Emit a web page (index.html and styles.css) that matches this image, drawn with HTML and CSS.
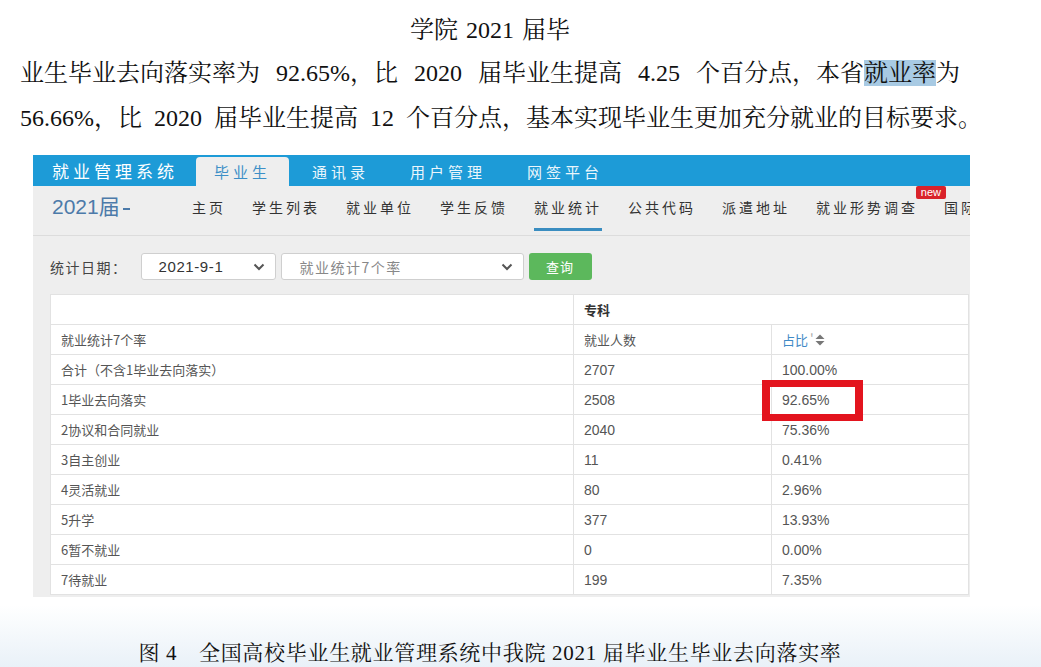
FILE: index.html
```html
<!DOCTYPE html>
<html lang="zh-CN">
  <head>
    <meta charset="UTF-8" />
    <meta name="viewport" content="width=device-width, initial-scale=1.0" />
    <title>毕业去向落实率</title>
    <link rel="stylesheet" href="styles.css">
  </head>
  <body>
    <div class="page">
      <p class="title">学院 2021 届毕</p>
      <p class="para"><span class="wide">业生毕业去向落实率为 92.65%，比 2020 届毕业生提高 4.25 个百分点，本省<span class="hl">就业率</span>为</span><br>56.66%，比 2020 届毕业生提高 12 个百分点，基本实现毕业生更加充分就业的目标要求。</p>

      <div class="shot">
        <div class="topbar">
          <div class="brand">就业管理系统</div>
          <div class="tab active">毕业生</div>
          <div class="tab">通讯录</div>
          <div class="tab">用户管理</div>
          <div class="tab">网签平台</div>
        </div>

        <div class="subnav">
          <div class="year">2021届<span class="caret"></span></div>
          <div class="menu">
            <div class="item">主页</div>
            <div class="item">学生列表</div>
            <div class="item">就业单位</div>
            <div class="item">学生反馈</div>
            <div class="item current">就业统计</div>
            <div class="item">公共代码</div>
            <div class="item">派遣地址</div>
            <div class="item hasNew">就业形势调查<span class="new">new</span></div>
            <div class="item">国际</div>
          </div>
        </div>

        <div class="filters">
          <span class="label">统计日期：</span>
          <div class="select date">
            <span>2021-9-1</span>
            <svg class="chev" width="12" height="8" viewBox="0 0 12 8"><polyline points="1.5,1.5 6,6 10.5,1.5" fill="none" stroke="#555" stroke-width="2"/></svg>
          </div>
          <div class="select kind">
            <span>就业统计7个率</span>
            <svg class="chev" width="12" height="8" viewBox="0 0 12 8"><polyline points="1.5,1.5 6,6 10.5,1.5" fill="none" stroke="#555" stroke-width="2"/></svg>
          </div>
          <div class="btn">查询</div>
        </div>

        <table class="stats">
          <colgroup>
            <col class="c1"><col class="c2"><col class="c3">
          </colgroup>
          <tr>
            <td></td>
            <td colspan="2" class="major">专科</td>
          </tr>
          <tr>
            <td>就业统计7个率</td>
            <td>就业人数</td>
            <td class="sort">占比<span class="tick">'</span><svg width="10" height="12" viewBox="0 0 10 12"><polygon points="5,0.5 9.5,5 0.5,5" fill="#777"/><polygon points="0.5,7 9.5,7 5,11.5" fill="#777"/></svg></td>
          </tr>
          <tr><td>合计（不含1毕业去向落实）</td><td class="num">2707</td><td class="num">100.00%</td></tr>
          <tr><td>1毕业去向落实</td><td class="num">2508</td><td class="num mark"><span class="redBox"></span>92.65%</td></tr>
          <tr><td>2协议和合同就业</td><td class="num">2040</td><td class="num">75.36%</td></tr>
          <tr><td>3自主创业</td><td class="num">11</td><td class="num">0.41%</td></tr>
          <tr><td>4灵活就业</td><td class="num">80</td><td class="num">2.96%</td></tr>
          <tr><td>5升学</td><td class="num">377</td><td class="num">13.93%</td></tr>
          <tr><td>6暂不就业</td><td class="num">0</td><td class="num">0.00%</td></tr>
          <tr><td>7待就业</td><td class="num">199</td><td class="num">7.35%</td></tr>
        </table>
      </div>

      <p class="caption">图 4　全国高校毕业生就业管理系统中我院 2021 届毕业生毕业去向落实率</p>
    </div>
  </body>
</html>
```

FILE: styles.css
```css
html {
  height: 100%;
  background: linear-gradient(to bottom, #fff 0, #fff 605px, #e9f1f8 667px);
}
body {
  margin: 0;
  color: #111;
}
.page {
  width: 980px;
}
.title,
.para,
.caption {
  font-family: "Liberation Serif", "Noto Serif CJK SC", "Noto Sans CJK SC", serif;
}
.title {
  margin: 15px 0 0;
  font-size: 24px;
  line-height: 30px;
  text-align: center;
  word-spacing: 2px;
}
.para {
  margin: 6px 0 0;
  padding-left: 20px;
  font-size: 24px;
  line-height: 45px;
  white-space: nowrap;
  word-spacing: 6px;
}
.para .wide {
  word-spacing: 10px;
}
.hl {
  background-color: #a8cae3;
}

/* screenshot of the system */
.shot {
  width: 937px;
  margin: 14px 0 0 33px;
  padding-bottom: 2px;
  background-color: #eeeeee;
  overflow: hidden;
  font-family: "Noto Sans CJK SC", "Liberation Sans", sans-serif;
}
.topbar {
  display: flex;
  align-items: flex-end;
  height: 31px;
  background-color: #1d9bd7;
  color: #fff;
}
.brand {
  align-self: center;
  padding: 0 18px 0 19px;
  font-size: 17px;
  letter-spacing: 4px;
  line-height: 31px;
}
.tab {
  height: 29px;
  padding: 0 18px;
  margin-right: 5px;
  font-size: 15px;
  letter-spacing: 4px;
  line-height: 29px;
  color: #eaf6fc;
}
.tab.active {
  background-color: #eeeeee;
  border-radius: 4px 4px 0 0;
  color: #3d8fc7;
}

.subnav {
  display: flex;
  height: 49px;
  border-bottom: 1px solid #dcdcdc;
  white-space: nowrap;
}
.year {
  padding: 8px 0 0 19px;
  width: 140px;
  flex-shrink: 0;
  font-family: "Liberation Sans", "Noto Sans CJK SC", sans-serif;
  font-size: 21px;
  line-height: 26px;
  color: #4c7aa9;
}
.caret {
  display: inline-block;
  width: 7px;
  height: 2px;
  margin-left: 3px;
  vertical-align: 4px;
  background-color: #4c7aa9;
}
.menu {
  display: flex;
  gap: 26px;
}
.item {
  position: relative;
  height: 34px;
  padding-top: 11px;
  font-size: 14px;
  letter-spacing: 3px;
  line-height: 20px;
  color: #333;
}
.item.current {
  border-bottom: 3px solid #3a8dc0;
  height: 31px;
}
.new {
  position: absolute;
  top: 0;
  right: -28px;
  padding: 0 5px;
  height: 13px;
  border-radius: 2px;
  background-color: #d9222a;
  color: #fff;
  font-family: "Liberation Sans", sans-serif;
  font-size: 11px;
  line-height: 12px;
  letter-spacing: 0;
}

.filters {
  display: flex;
  align-items: center;
  padding: 17px 0 14px 17px;
}
.label {
  margin-right: 13px;
  font-size: 14px;
  letter-spacing: 1.5px;
  color: #444;
}
.select {
  display: flex;
  align-items: center;
  justify-content: space-between;
  box-sizing: border-box;
  height: 27px;
  margin-right: 5px;
  border: 1px solid #cfcfcf;
  border-radius: 3px;
  background-color: #fff;
  color: #333;
}
.select.date {
  width: 135px;
  padding: 0 10px 0 17px;
  font-family: "Liberation Sans", sans-serif;
  font-size: 15px;
  letter-spacing: 0.6px;
}
.select.kind {
  width: 243px;
  padding: 0 10px 0 18px;
  font-size: 14px;
  letter-spacing: 1.5px;
  color: #888;
}
.btn {
  width: 63px;
  height: 27px;
  border-radius: 3px;
  background-color: #5cb85c;
  color: #fff;
  font-size: 13px;
  line-height: 27px;
  text-align: center;
  letter-spacing: 1px;
}

.stats {
  margin-left: 17px;
  width: 918px;
  table-layout: fixed;
  border-collapse: collapse;
  background-color: #fff;
  font-size: 13px;
  color: #555;
}
.c1 {
  width: 523px;
}
.c2 {
  width: 198px;
}
.c3 {
  width: 197px;
}
.stats td {
  height: 29px;
  padding: 0 10px;
  border: 1px solid #e2e2e2;
  line-height: 20px;
  white-space: nowrap;
}
.stats .major {
  color: #333;
  font-weight: bold;
}
.stats .num {
  font-family: "Liberation Sans", sans-serif;
  font-size: 14px;
}
.sort {
  color: #3f8ac6;
}
.sort .tick {
  color: #aaa;
  margin: 0 1px 0 2px;
}
.sort svg {
  vertical-align: -1px;
}
.mark {
  position: relative;
}
.redBox {
  position: absolute;
  left: -10px;
  top: -5px;
  width: 85px;
  height: 27px;
  border: 7px solid #e3141e;
  border-width: 7px 8px;
}

.caption {
  margin: 41px 0 0;
  font-size: 21px;
  line-height: 30px;
  text-align: center;
  letter-spacing: 0.7px;
}
```
